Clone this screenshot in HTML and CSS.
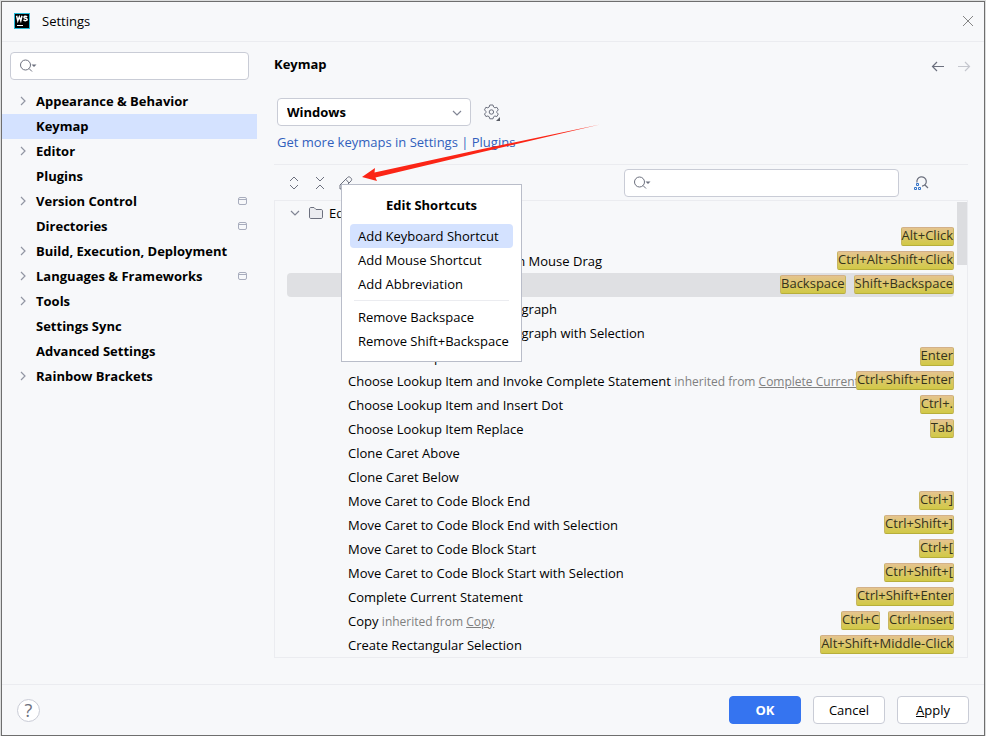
FILE: index.html
```html
<!DOCTYPE html>
<html lang="en">

<head>
    <meta charset="UTF-8">
    <meta name="viewport" content="width=device-width, initial-scale=1.0">
    <title>Settings</title>
    <link rel="stylesheet" href="styles.css">
</head>

<body>
    <!-- shared icons -->
    <svg class="sprite" aria-hidden="true">
        <symbol id="search" viewBox="0 0 18 16">
            <circle cx="6.500" cy="7" r="5" fill="none" stroke="#6c707e" />
            <path d="M10 10.500L13 13.500" fill="none" stroke="#6c707e" />
            <path d="M12.500 6.500h5l-2.500 2.500z" fill="#6c707e" />
        </symbol>
        <symbol id="right" viewBox="0 0 16 16">
            <path d="M7 4l4 4-4 4" fill="none" stroke="#9296a3" stroke-width="1.200" />
        </symbol>
        <symbol id="down" viewBox="0 0 16 16">
            <path d="M4 6l4 4 4-4" fill="none" stroke="#818594" stroke-width="1.200" />
        </symbol>
        <symbol id="project" viewBox="0 0 16 16">
            <rect x="4.500" y="4.500" width="8" height="7" rx="1.500" fill="none" stroke="#a8adbd" />
            <path d="M4.500 6.500h8" stroke="#a8adbd" />
        </symbol>
    </svg>

    <div class="window">
        <header class="titlebar">
            <svg class="logo" width="16" height="16" viewBox="0 0 16 16">
                <rect width="16" height="16" fill="#24b8d6" />
                <rect x="1" y="1" width="14" height="14" fill="#000" />
                <path d="M2.600 2.800l1.200 5L5.300 3.800l1.500 4L8 2.800M13.200 3.900c-1.800-1.200-3.400-.6-3.200.5.2 1.200 3.100.7 3.200 2.100 0 1.400-2.200 1.500-3.700.3" fill="none" stroke="#fff" stroke-width="1.500" />
                <path d="M3 12.500h6" stroke="#fff" />
            </svg>
            <span>Settings</span>
            <button class="icon close" aria-label="Close">
                <svg width="16" height="16" viewBox="0 0 16 16"><path d="M3 3l10 10M13 3L3 13" stroke="#777" stroke-width=".9" /></svg>
            </button>
        </header>

        <div class="content">
            <nav class="sidebar">
                <label class="search">
                    <svg width="18" height="16"><use href="#search" /></svg>
                    <input type="text" aria-label="Search settings">
                </label>
                <ul class="tree">
                    <li><svg class="arrow"><use href="#right" /></svg><span>Appearance &amp; Behavior</span></li>
                    <li class="active"><span>Keymap</span></li>
                    <li><svg class="arrow"><use href="#right" /></svg><span>Editor</span></li>
                    <li><span>Plugins</span></li>
                    <li><svg class="arrow"><use href="#right" /></svg><span>Version Control</span><svg class="project"><use href="#project" /></svg></li>
                    <li><span>Directories</span><svg class="project"><use href="#project" /></svg></li>
                    <li><svg class="arrow"><use href="#right" /></svg><span>Build, Execution, Deployment</span></li>
                    <li><svg class="arrow"><use href="#right" /></svg><span>Languages &amp; Frameworks</span><svg class="project"><use href="#project" /></svg></li>
                    <li><svg class="arrow"><use href="#right" /></svg><span>Tools</span></li>
                    <li><span>Settings Sync</span></li>
                    <li><span>Advanced Settings</span></li>
                    <li><svg class="arrow"><use href="#right" /></svg><span>Rainbow Brackets</span></li>
                </ul>
            </nav>

            <main class="main">
                <div class="heading">
                    <h1>Keymap</h1>
                    <button class="icon" aria-label="Back">
                        <svg width="16" height="18" viewBox="0 0 16 18"><path d="M14 11.500H2.500M7 7L2.500 11.500 7 16" fill="none" stroke="#6c707e" stroke-width="1.200" /></svg>
                    </button>
                    <button class="icon" aria-label="Forward" disabled>
                        <svg width="16" height="18" viewBox="0 0 16 18"><path d="M2 11.500h11.500M9 7l4.500 4.500L9 16" fill="none" stroke="#c5c7ce" stroke-width="1.200" /></svg>
                    </button>
                </div>

                <div class="scheme">
                    <div class="select">
                        <select aria-label="Keymap scheme">
                            <option>Windows</option>
                        </select>
                        <svg><use href="#down" /></svg>
                    </div>
                    <button class="icon" aria-label="Scheme actions">
                        <svg width="18" height="18" viewBox="0 0 18 18">
                            <path d="M6.800 2l-.6 2-1.400.8-2-.5-1.300 2.600 1.400 1.500v1.200L1.500 11l1.400 2.500 2-.5 1.300.8.6 2h3.200l.6-2 1.300-.8 2 .5 1.400-2.500-1.400-1.400V8.400l1.400-1.500-1.400-2.600-2 .5-1.300-.8-.6-2z" fill="none" stroke="#6c707e" stroke-linejoin="round" />
                            <circle cx="8.400" cy="9" r="2.200" fill="none" stroke="#6c707e" />
                            <path d="M17 14v4h-4z" fill="#5a5d66" />
                        </svg>
                    </button>
                </div>
                <a class="more" href="#">Get more keymaps in Settings | Plugins</a>

                <div class="toolbar">
                    <button class="icon" aria-label="Expand all">
                        <svg width="16" height="16" viewBox="0 0 16 16"><path d="M4 6l4-4 4 4M4 10l4 4 4-4" fill="none" stroke="#6c707e" /></svg>
                    </button>
                    <button class="icon" aria-label="Collapse all">
                        <svg width="16" height="16" viewBox="0 0 16 16"><path d="M4 2l4 4 4-4M4 14l4-4 4 4" fill="none" stroke="#6c707e" /></svg>
                    </button>
                    <button class="icon" aria-label="Edit shortcuts">
                        <svg width="16" height="16" viewBox="0 0 16 16"><path d="M2 14v-4l7.500-7.500c1-1 2-.8 2.900 0l.6.600c.9.900.9 1.900 0 2.900L5.500 13.500 2 14M8 4.500L11 8" fill="none" stroke="#6c707e" /></svg>
                    </button>
                    <label class="search">
                        <svg width="18" height="16"><use href="#search" /></svg>
                        <input type="text" aria-label="Search actions">
                    </label>
                    <button class="icon" aria-label="Find by shortcut">
                        <svg width="16" height="16" viewBox="0 0 16 16">
                            <path d="M4 7.500A4.700 4.700 0 1 1 9 11.200M12 10l3 3" fill="none" stroke="#6c707e" stroke-width="1.200" />
                            <path d="M3.500 8.500h2v2h-2zM1.500 12.500h2v2h-2zM5.500 12.500h2v2h-2z" fill="none" stroke="#3574c8" />
                        </svg>
                    </button>

                    <div class="menu">
                        <h2>Edit Shortcuts</h2>
                        <button class="selected">Add Keyboard Shortcut</button>
                        <button>Add Mouse Shortcut</button>
                        <button>Add Abbreviation</button>
                        <hr>
                        <button>Remove Backspace</button>
                        <button>Remove Shift+Backspace</button>
                    </div>
                    <svg class="pointer" width="240" height="60" viewBox="0 0 240 60">
                        <path d="M1 53L14 44 13.500 48.500L119 25.500 239 .5 119 28.500 14.500 53.500 16 57Z" fill="#fb2516" />
                    </svg>
                </div>

                <div class="actions">
                    <ul>
                        <li class="group"><svg><use href="#down" /></svg><svg viewBox="0 0 16 16"><path d="M1.500 4c0-1 .5-1.500 1.500-1.500h3l2 2h5c1 0 1.500.500 1.500 1.500v6c0 1-.5 1.500-1.500 1.500H3c-1 0-1.500-.5-1.500-1.500z" fill="#ebecf0" stroke="#6c707e" /></svg><span>Editor Actions</span></li>
                        <li><span class="name">Add or Remove Caret</span><kbd>Alt+Click</kbd></li>
                        <li><span class="name">Add Rectangular Selection on Mouse Drag</span><kbd>Ctrl+Alt+Shift+Click</kbd></li>
                        <li class="selected"><span class="name">Backspace</span><kbd>Backspace</kbd><kbd>Shift+Backspace</kbd></li>
                        <li><span class="name">Move Caret Backward a Paragraph</span></li>
                        <li><span class="name">Move Caret Backward a Paragraph with Selection</span></li>
                        <li><span class="name">Choose Lookup Item</span><kbd>Enter</kbd></li>
                        <li><span class="name">Choose Lookup Item and Invoke Complete Statement <i>inherited from <a href="#">Complete Current Statement</a></i></span><kbd>Ctrl+Shift+Enter</kbd></li>
                        <li><span class="name">Choose Lookup Item and Insert Dot</span><kbd>Ctrl+.</kbd></li>
                        <li><span class="name">Choose Lookup Item Replace</span><kbd>Tab</kbd></li>
                        <li><span class="name">Clone Caret Above</span></li>
                        <li><span class="name">Clone Caret Below</span></li>
                        <li><span class="name">Move Caret to Code Block End</span><kbd>Ctrl+]</kbd></li>
                        <li><span class="name">Move Caret to Code Block End with Selection</span><kbd>Ctrl+Shift+]</kbd></li>
                        <li><span class="name">Move Caret to Code Block Start</span><kbd>Ctrl+[</kbd></li>
                        <li><span class="name">Move Caret to Code Block Start with Selection</span><kbd>Ctrl+Shift+[</kbd></li>
                        <li><span class="name">Complete Current Statement</span><kbd>Ctrl+Shift+Enter</kbd></li>
                        <li><span class="name">Copy <i>inherited from <a href="#">Copy</a></i></span><kbd>Ctrl+C</kbd><kbd>Ctrl+Insert</kbd></li>
                        <li><span class="name">Create Rectangular Selection</span><kbd>Alt+Shift+Middle-Click</kbd></li>
                    </ul>
                    <div class="scrollbar"><div class="thumb"></div></div>
                </div>
            </main>
        </div>

        <footer class="footer">
            <button class="help" aria-label="Help">?</button>
            <button class="btn primary">OK</button>
            <button class="btn">Cancel</button>
            <button class="btn"><u>A</u>pply</button>
        </footer>
    </div>
</body>

</html>
```
FILE: styles.css
```css
* {
    box-sizing: border-box;
}

body {
    margin: 0;
    padding: 1px 1px 0;
    background-color: #dcdddd;
    color: #000;
    font-family: "Open Sans", "Noto Sans", sans-serif;
    font-size: 13px;
    line-height: 20px;
}

button,
input,
select {
    font: inherit;
    color: inherit;
}

ul {
    margin: 0;
    padding: 0;
    list-style: none;
}

svg {
    display: block;
    flex-shrink: 0;
}

.sprite {
    display: none;
}

.window {
    display: flex;
    flex-direction: column;
    min-height: calc(100vh - 1px);
    border: 1px solid #6e6e6e;
    background-color: #f7f8fa;
}

.icon {
    display: flex;
    padding: 0;
    border: 0;
    background: none;
}

/* title bar */
.titlebar {
    display: flex;
    align-items: center;
    height: 40px;
    padding: 0 8px 1px 12px;
    border-bottom: 1px solid #ebecf0;
}

.logo {
    margin-right: 12px;
}

.close {
    margin-left: auto;
}

.content {
    display: flex;
    flex: 1;
}

.search {
    display: flex;
    align-items: center;
    height: 28px;
    padding-left: 8px;
    border: 1px solid #c9ccd6;
    border-radius: 4px;
    background-color: #fff;
}

.search input {
    flex: 1;
    min-width: 0;
    border: 0;
    outline: 0;
    background: none;
}

/* left tree */
.sidebar {
    width: 255px;
    padding-top: 10px;
}

.sidebar .search {
    margin: 0 8px 9px;
}

.tree li {
    display: flex;
    align-items: center;
    height: 25px;
    padding: 0 7px 1px 34px;
    font-weight: bold;
}

.tree .active {
    background-color: #d4e2ff;
}

.tree svg {
    width: 16px;
    height: 16px;
}

.tree .arrow {
    margin: 0 6px 0 -22px;
}

.tree .project {
    margin-left: auto;
}

/* right side */
.main {
    flex: 1;
    min-width: 0;
    padding: 0 16px 26px 17px;
}

.heading {
    display: flex;
    align-items: center;
    gap: 10px;
    height: 46px;
    margin: 0 -4px 10px 0;
    padding-bottom: 2px;
}

.heading h1 {
    flex: 1;
    margin: 0;
    font-size: 13px;
}

.scheme {
    display: flex;
    align-items: center;
    gap: 12px;
    margin: 0 0 6px 3px;
}

.select {
    position: relative;
    width: 194px;
}

.select select {
    appearance: none;
    width: 100%;
    height: 28px;
    padding: 0 9px;
    border: 1px solid #c9ccd6;
    border-radius: 4px;
    background-color: #fff;
    font-weight: bold;
}

.select svg {
    position: absolute;
    top: 7px;
    right: 6px;
    width: 16px;
    height: 16px;
    pointer-events: none;
}

.more {
    display: block;
    margin: 0 0 12px 3px;
    color: #315fbd;
    text-decoration: none;
}

.toolbar {
    position: relative;
    display: flex;
    align-items: center;
    gap: 10px;
    height: 36px;
    padding-left: 12px;
    border-top: 1px solid #ebecf0;
}

.toolbar .search {
    width: 275px;
    margin-left: auto;
}

.toolbar .search + .icon {
    margin: 0 39px 0 4px;
}

/* popup */
.menu {
    position: absolute;
    top: 19px;
    left: 67px;
    z-index: 1;
    width: 181px;
    padding: 8px;
    border: 1px solid #b9bdc9;
    background-color: #fff;
}

.menu h2 {
    margin: 0 0 7px;
    font-size: 13px;
    line-height: 24px;
    text-align: center;
}

.menu button {
    display: block;
    width: 100%;
    height: 24px;
    padding: 0 8px;
    border: 0;
    border-radius: 4px;
    background: none;
    text-align: left;
    white-space: nowrap;
}

.menu .selected {
    background-color: #d4e2ff;
}

.menu hr {
    margin: 4px;
    border: 0;
    border-top: 1px solid #ebecf0;
}

.pointer {
    position: absolute;
    top: -41px;
    left: 87px;
    z-index: 2;
    pointer-events: none;
}

/* actions list */
.actions {
    display: flex;
    border: 1px solid #ebecf0;
}

.actions ul {
    flex: 1;
    min-width: 0;
    padding: 0 3px 0 12px;
}

.actions li {
    display: flex;
    align-items: center;
    height: 24px;
    padding-left: 61px;
    white-space: nowrap;
}

.actions .group {
    gap: 5px;
    padding-left: 0;
}

.group svg {
    width: 16px;
    height: 16px;
}

.actions .selected {
    border-radius: 4px;
    background-color: #dfe0e3;
}

.name {
    flex: 1;
    min-width: 0;
    overflow: hidden;
}

.name i {
    color: #808080;
    font-size: 12px;
    font-style: normal;
}

.name a {
    color: inherit;
}

kbd {
    height: 19px;
    margin-bottom: 1px;
    border: 1px solid;
    border-color: #d3b189 #c8b662 #b7ae3c;
    border-radius: 2px;
    background: linear-gradient(#e5c48e, #d1c946);
    color: #35331c;
    font-family: inherit;
    font-size: 13px;
    line-height: 15px;
}

kbd + kbd {
    margin-left: 8px;
}

.scrollbar {
    width: 10px;
    padding-top: 1px;
}

.thumb {
    height: 63px;
    background-color: #dcdde0;
}

/* bottom buttons */
.footer {
    display: flex;
    align-items: center;
    gap: 12px;
    height: 51px;
    padding: 0 15px;
    border-top: 1px solid #ebecf0;
}

.btn {
    width: 72px;
    height: 28px;
    padding: 0;
    border: 1px solid #c9ccd6;
    border-radius: 4px;
    background-color: #fff;
}

.primary {
    border-color: #3574f0;
    background-color: #3574f0;
    color: #fff;
    font-weight: bold;
}

.help {
    width: 23px;
    height: 23px;
    margin-right: auto;
    padding: 0;
    border: 1px solid #c9ccd6;
    border-radius: 50%;
    background-color: #fff;
    color: #6c707e;
    font-size: 18px;
}
```
